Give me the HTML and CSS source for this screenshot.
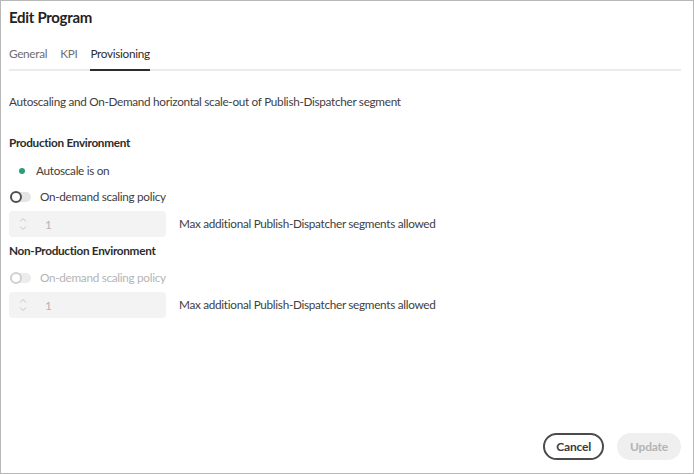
FILE: index.html
```html
<!DOCTYPE html>
<html>
<head>
<meta charset="utf-8">
<link rel="stylesheet" href="styles.css">
</head>
<body>
<div class="dialog">
  <h1 class="title">Edit Program</h1>
  <div class="tabs">
    <span class="tab">General</span>
    <span class="tab">KPI</span>
    <span class="tab active">Provisioning</span>
  </div>
  <p class="desc">Autoscaling and On-Demand horizontal scale-out of Publish-Dispatcher segment</p>

  <h2 class="section">Production Environment</h2>
  <div class="status"><span class="dot"></span>Autoscale is on</div>
  <div class="switch-row"><span class="switch"></span><span>On-demand scaling policy</span></div>
  <div class="field-row">
    <div class="number">
      <svg class="stepper" width="8" height="16" viewBox="0 0 8 16"><path d="M1 5.5 L4 2.5 L7 5.5" /><path d="M1 10.5 L4 13.5 L7 10.5" /></svg>
      <span class="val">1</span>
    </div>
    <span class="label">Max additional Publish-Dispatcher segments allowed</span>
  </div>

  <h2 class="section second">Non-Production Environment</h2>
  <div class="switch-row disabled"><span class="switch"></span><span>On-demand scaling policy</span></div>
  <div class="field-row">
    <div class="number">
      <svg class="stepper" width="8" height="16" viewBox="0 0 8 16"><path d="M1 5.5 L4 2.5 L7 5.5" /><path d="M1 10.5 L4 13.5 L7 10.5" /></svg>
      <span class="val">1</span>
    </div>
    <span class="label">Max additional Publish-Dispatcher segments allowed</span>
  </div>

  <div class="footer">
    <button class="btn secondary">Cancel</button>
    <button class="btn primary" disabled>Update</button>
  </div>
</div>
</body>
</html>
```
FILE: styles.css
```css
* { box-sizing: border-box; }
html, body { margin: 0; padding: 0; }
body {
  width: 694px;
  height: 474px;
  font-family: Lato, "Noto Sans", sans-serif;
  font-size: 11.75px;
  letter-spacing: -0.3px;
  color: #2c2c2c;
  background: #fff;
}
.dialog {
  width: 694px;
  height: 474px;
  border: 1px solid #b8b8b8;
  padding: 0 12px 0 8px;
  display: flex;
  flex-direction: column;
}
.title {
  margin: 5px 0 0 0;
  font-size: 15px;
  font-weight: 700;
  color: #222;
  line-height: 22px;
  letter-spacing: -0.3px;
}
.tabs {
  display: flex;
  gap: 13px;
  margin-top: 12px;
  border-bottom: 2px solid #ebebeb;
  height: 31px;
}
.tab {
  color: #6e6e6e;
  line-height: 16px;
  padding-top: 6px;
}
.tab.active {
  color: #2c2c2c;
  border-bottom: 2px solid #2c2c2c;
  margin-bottom: -2px;
}
.desc {
  margin: 23px 0 0 0;
  line-height: 16px;
  color: #3e3e3e;
}
.section {
  margin: 25px 0 0 0;
  font-size: 11.75px;
  font-weight: 700;
  line-height: 16px;
  color: #2c2c2c;
}
.section.second { margin-top: 6px; }
.status {
  display: flex;
  align-items: center;
  margin-top: 12px;
  padding-left: 10px;
  line-height: 16px;
  color: #3e3e3e;
}
.dot {
  width: 6px;
  height: 6px;
  border-radius: 50%;
  background: #2d9d78;
  margin-right: 11px;
}
.switch-row {
  display: flex;
  align-items: center;
  gap: 9px;
  margin-top: 10px;
  line-height: 16px;
  color: #3e3e3e;
}
.switch-row.disabled { margin-top: 11px; }
.switch {
  width: 21px;
  height: 10px;
  border-radius: 5px;
  background: #e4e4e4;
  position: relative;
  margin-left: 1px;
}
.switch::before {
  content: "";
  position: absolute;
  left: 0;
  top: -1px;
  width: 12px;
  height: 12px;
  box-sizing: border-box;
  border-radius: 50%;
  border: 2px solid #505050;
  background: #fff;
}
.switch-row.disabled { color: #b4b4b4; }
.switch-row.disabled .switch { background: #ececec; }
.switch-row.disabled .switch::before { border-color: #d0d0d0; }
.field-row {
  display: flex;
  align-items: center;
  gap: 13px;
  margin-top: 6px;
}
.number {
  width: 157px;
  height: 26px;
  background: #f3f3f3;
  border-radius: 4px;
  display: flex;
  align-items: center;
  padding-left: 10px;
  flex: none;
}
.stepper path {
  fill: none;
  stroke: #c4c4c4;
  stroke-width: 1;
}
.val {
  color: #b4b4b4;
  margin-left: 18px;
}
.label {
  line-height: 16px;
  color: #3e3e3e;
}
.footer {
  margin-top: auto;
  display: flex;
  justify-content: flex-end;
  gap: 13px;
  padding-bottom: 13px;
}
.btn {
  height: 27px;
  border-radius: 14px;
  font-family: inherit;
  font-size: 12px;
  letter-spacing: -0.2px;
  font-weight: 700;
  padding: 0 11px;
}
.btn.secondary {
  background: #fff;
  border: 2px solid #4b4b4b;
  color: #3a3a3a;
}
.btn.primary {
  background: #efefef;
  border: none;
  color: #b4b4b4;
  padding: 0 13px;
}
```
